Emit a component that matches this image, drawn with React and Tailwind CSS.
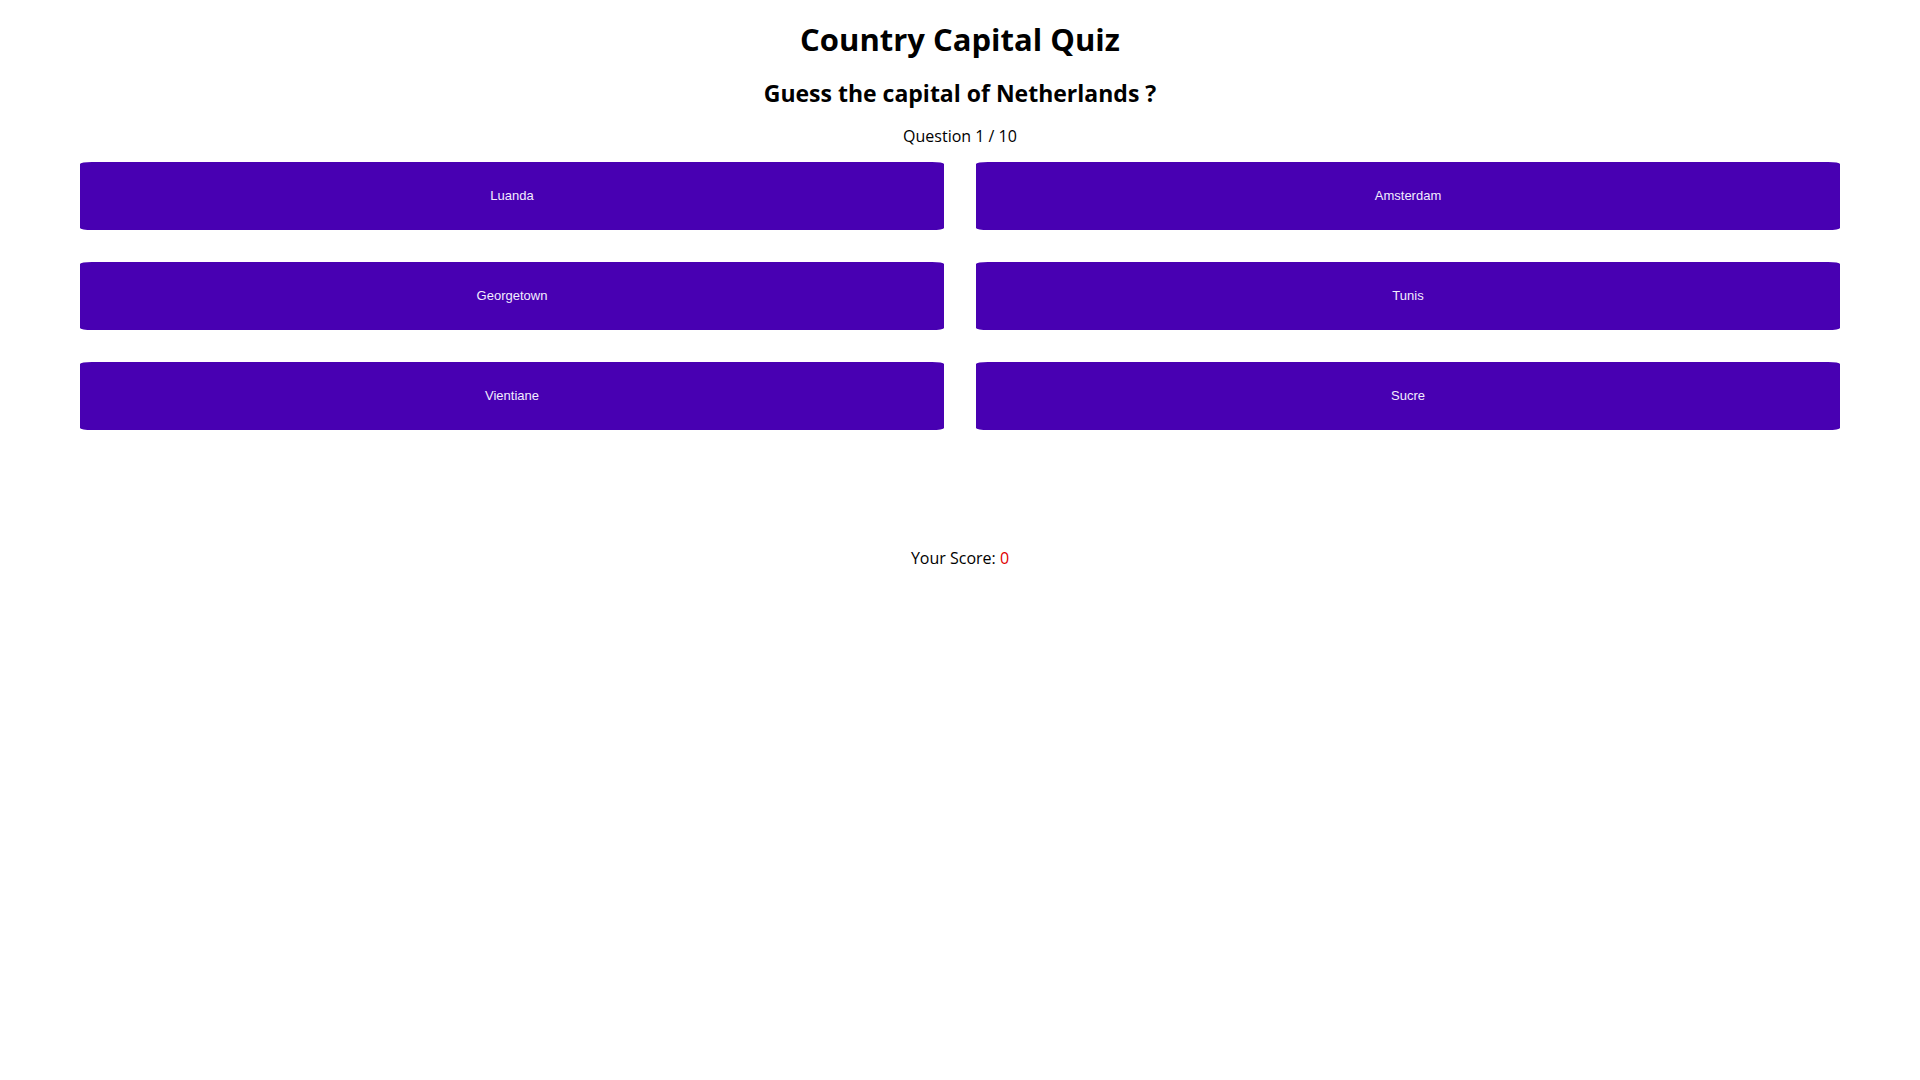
const options = ["Luanda", "Amsterdam", "Georgetown", "Tunis", "Vientiane", "Sucre"];

export default function App() {
  return (
    <div className="min-h-screen bg-white text-black text-center font-['Open_Sans',sans-serif]">
      <h1 className="pt-[21px] text-[31px] leading-[37px] font-bold">Country Capital Quiz</h1>
      <h2 className="mt-[21px] text-[23px] leading-[28px] font-bold">Guess the capital of Netherlands ?</h2>
      <p className="mt-[20px] text-[16px] leading-[19px]">Question 1 / 10</p>

      <div className="mt-[16px] px-[80px] grid grid-cols-2 gap-x-[32px] gap-y-[32px]">
        {options.map((opt) => (
          <button
            key={opt}
            className="h-[68px] bg-[#4800b2] text-[#f3ecff] text-[13px] font-['Liberation_Sans',Arial,sans-serif] rounded-[12px/2px]"
          >
            {opt}
          </button>
        ))}
      </div>

      <p className="mt-[119px] text-[16px] leading-[19px]">
        Your Score: <span className="text-[#e00000]">0</span>
      </p>
    </div>
  );
}
